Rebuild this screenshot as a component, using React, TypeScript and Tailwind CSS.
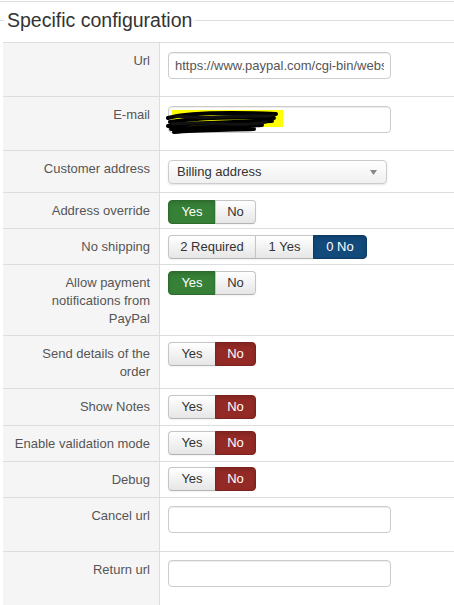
import type { ReactNode } from 'react'

const font = { fontFamily: '"Liberation Sans", Arial, sans-serif' }

type Seg = { label: string; width: string; active?: 'green' | 'red' | 'blue' }

function BtnGroup({ segs }: { segs: Seg[] }) {
  return (
    <div className="flex">
      {segs.map((s, i) => {
        const first = i === 0
        const last = i === segs.length - 1
        const round = `${first ? 'rounded-l-[4px]' : ''} ${last ? 'rounded-r-[4px]' : ''} ${!first ? '-ml-px' : ''}`
        let tone =
          'bg-gradient-to-b from-white to-[#e6e6e6] text-[#333] border-[#c5c5c5] border-b-[#b3b3b3] shadow-[inset_0_1px_0_rgba(255,255,255,0.2),0_1px_2px_rgba(0,0,0,0.05)]'
        if (s.active === 'green') tone = 'bg-[#378137] text-white border-[#2c6b2c] shadow-[inset_0_2px_4px_rgba(0,0,0,0.15)]'
        if (s.active === 'red') tone = 'bg-[#942a25] text-white border-[#7c211d] shadow-[inset_0_2px_4px_rgba(0,0,0,0.15)]'
        if (s.active === 'blue') tone = 'bg-[#124a7c] text-white border-[#0d3b63] shadow-[inset_0_2px_4px_rgba(0,0,0,0.15)]'
        return (
          <div
            key={s.label}
            className={`h-[24px] ${s.width} flex items-center justify-center border text-[13px] leading-[18px] ${round} ${tone}`}
          >
            {s.label}
          </div>
        )
      })}
    </div>
  )
}

const yesOn: Seg[] = [
  { label: 'Yes', width: 'w-[48px]', active: 'green' },
  { label: 'No', width: 'w-[41px]' },
]
const noOn: Seg[] = [
  { label: 'Yes', width: 'w-[48px]' },
  { label: 'No', width: 'w-[41px]', active: 'red' },
]

function TextInput({ value }: { value?: string }) {
  return (
    <input
      type="text"
      readOnly
      defaultValue={value ?? ''}
      className="block w-[223px] h-[27px] border border-[#ccc] rounded-[4px] bg-white shadow-[inset_0_1px_1px_rgba(0,0,0,0.075)] px-[6px] text-[13px] text-[#555] outline-none"
      style={font}
    />
  )
}

function Row({
  label,
  h,
  pt,
  last,
  children,
}: {
  label: ReactNode
  h: string
  pt: string
  last?: boolean
  children: ReactNode
}) {
  return (
    <div className={`flex border-t border-[#ddd] ${last ? 'flex-1' : h}`}>
      <div className="w-[157px] shrink-0 bg-[#f5f5f5] border-r border-[#ddd] pr-[9px] pt-[9px] text-right text-[13px] leading-[18px] text-[#555]">
        {label}
      </div>
      <div className={`flex-1 pl-[8px] ${pt}`}>{children}</div>
    </div>
  )
}

export default function App() {
  return (
    <div className="w-[454px] h-[605px] overflow-hidden bg-white flex flex-col" style={font}>
      <div className="mt-[1px] border-t border-[#ddd] h-[41px] flex items-start">
        <div className="flex items-center w-full mt-[5px]">
          <div className="w-[4px] h-px bg-[#ddd]" />
          <div className="px-[3px] text-[19.5px] leading-[26px] text-[#333]">Specific configuration</div>
          <div className="flex-1 h-px bg-[#ddd]" />
        </div>
      </div>

      <div className="ml-[3px] flex-1 flex flex-col">
        <Row label="Url" h="h-[54px]" pt="pt-[9px]">
          <TextInput value="https://www.paypal.com/cgi-bin/webscr" />
        </Row>
        <Row label="E-mail" h="h-[54px]" pt="pt-[9px]">
          <div className="relative w-[223px]">
            <TextInput />
            <svg className="absolute left-[-2px] top-[4px]" width="122" height="24" viewBox="0 0 122 24">
              <rect x="6" y="0" width="111" height="17" fill="#ffff00" />
              <path
                d="M2 8 C20 3 60 2 110 4 M4 12 C30 8 70 7 108 8 M2 16 C30 12 80 12 106 11 M5 19 C40 17 70 16 96 15 M8 22 C30 20 60 20 88 19"
                stroke="#000"
                strokeWidth="4"
                fill="none"
                strokeLinecap="round"
              />
              <path
                d="M10 6 C40 10 60 5 104 6 M6 14 C50 10 70 18 100 12"
                stroke="#111"
                strokeWidth="3"
                fill="none"
                strokeLinecap="round"
              />
            </svg>
          </div>
        </Row>
        <Row label="Customer address" h="h-[42px]" pt="pt-[9px]">
          <div className="w-[219px] h-[24px] border border-[#ccc] rounded-[4px] bg-gradient-to-b from-white to-[#f0f0f0] shadow-[0_1px_2px_rgba(0,0,0,0.1)] flex items-center justify-between pl-[8px] pr-[9px] text-[13px] text-[#333]">
            <span>Billing address</span>
            <svg width="7" height="5" viewBox="0 0 7 5">
              <path d="M0 0 H7 L3.5 5 Z" fill="#888" />
            </svg>
          </div>
        </Row>
        <Row label="Address override" h="h-[36px]" pt="pt-[7px]">
          <BtnGroup segs={yesOn} />
        </Row>
        <Row label="No shipping" h="h-[36px]" pt="pt-[6px]">
          <BtnGroup
            segs={[
              { label: '2 Required', width: 'w-[88px]' },
              { label: '1 Yes', width: 'w-[59px]' },
              { label: '0 No', width: 'w-[54px]', active: 'blue' },
            ]}
          />
        </Row>
        <Row label={<>Allow payment<br />notifications from<br />PayPal</>} h="h-[71px]" pt="pt-[6px]">
          <BtnGroup segs={yesOn} />
        </Row>
        <Row label={<>Send details of the<br />order</>} h="h-[53px]" pt="pt-[6px]">
          <BtnGroup segs={noOn} />
        </Row>
        <Row label="Show Notes" h="h-[37px]" pt="pt-[6px]">
          <BtnGroup segs={noOn} />
        </Row>
        <Row label="Enable validation mode" h="h-[36px]" pt="pt-[5px]">
          <BtnGroup segs={noOn} />
        </Row>
        <Row label="Debug" h="h-[36px]" pt="pt-[5px]">
          <BtnGroup segs={noOn} />
        </Row>
        <Row label="Cancel url" h="h-[54px]" pt="pt-[8px]">
          <TextInput />
        </Row>
        <Row label="Return url" h="h-[54px]" pt="pt-[8px]" last>
          <TextInput />
        </Row>
      </div>
    </div>
  )
}
